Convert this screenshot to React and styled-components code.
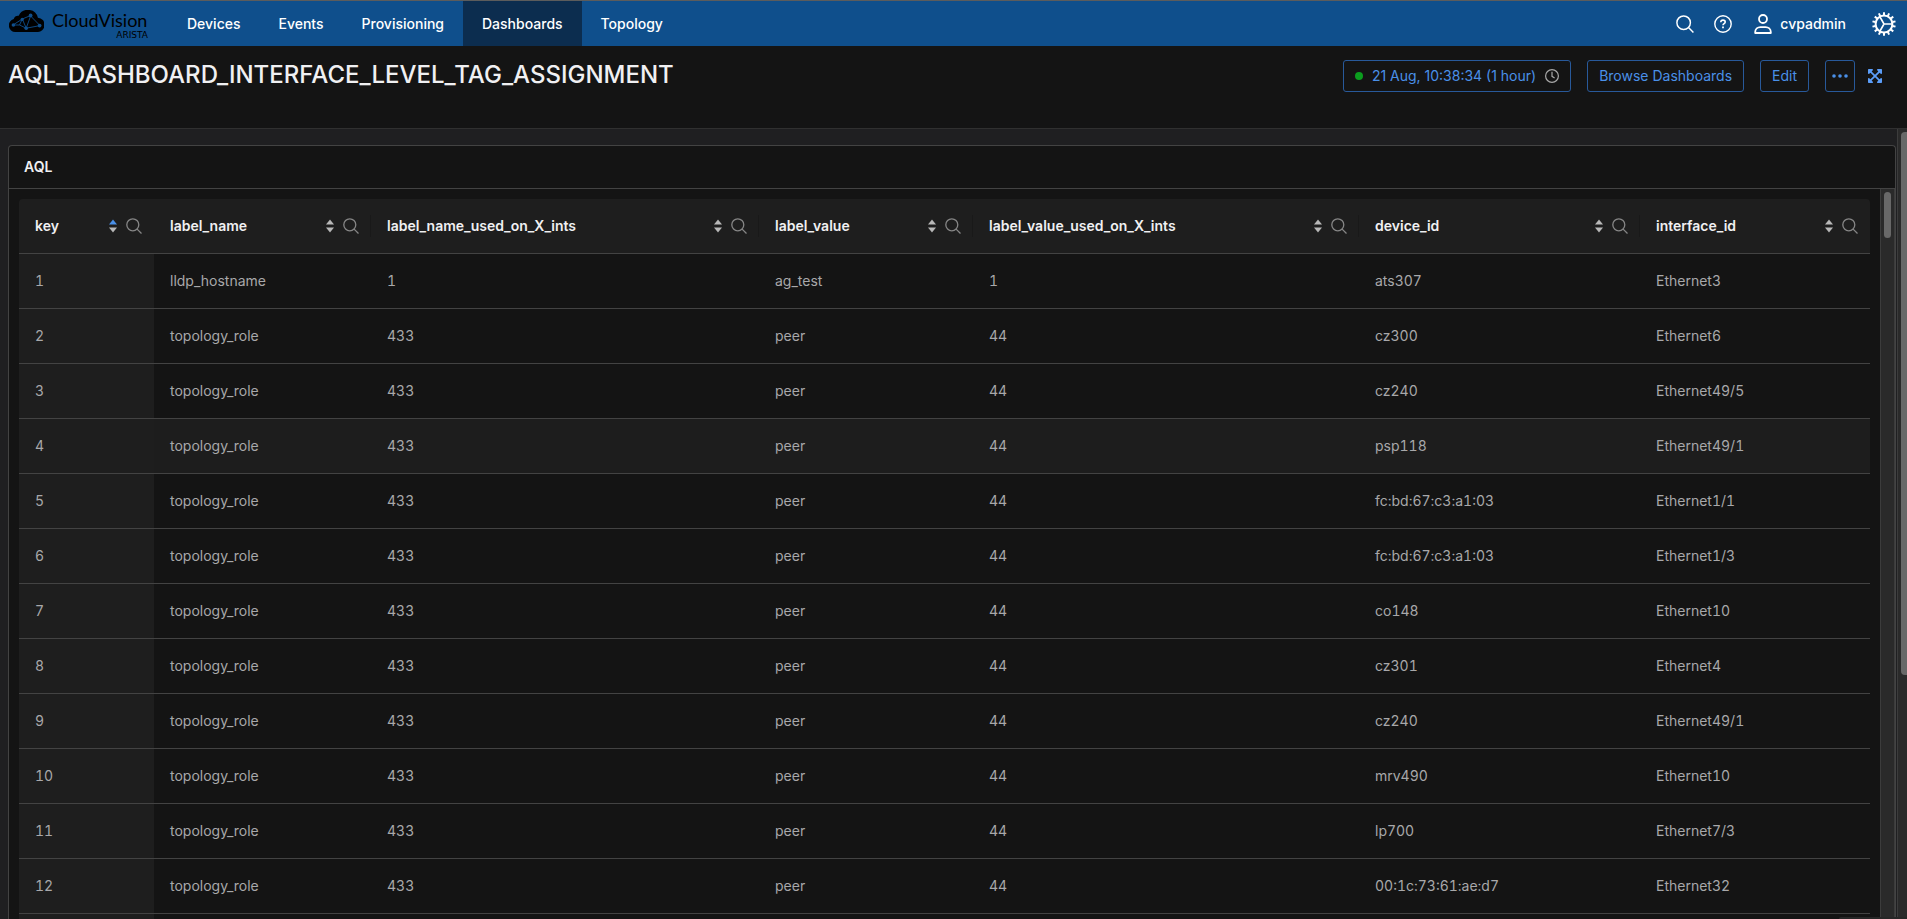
import React from "react";
import styled, { createGlobalStyle } from "styled-components";
import { FaExpandArrowsAlt } from "react-icons/fa";

const color = {
  bar: "#0f4f8c",
  barActive: "#0c2d4f",
  surface: "#141414",
  page: "#1f1f21",
  raised: "#1e1e1e",
  line: "#434343",
  text: "#a8a8aa",
  strong: "#f0f0f2",
  link: "#4a90e8",
  linkBorder: "#28599a",
  track: "#2a2a2a",
  thumb: "#686868",
};

const GlobalStyle = createGlobalStyle`
  *, *::before, *::after { box-sizing: border-box; }
  body {
    margin: 0;
    background: ${color.page};
    color: ${color.text};
    font: 400 14px/22px Inter, "Liberation Sans", sans-serif;
  }
  button {
    margin: 0;
    padding: 0;
    border: 0;
    background: none;
    color: inherit;
    font: inherit;
    cursor: pointer;
  }
  svg { display: block; flex: none; }
`;

const Page = styled.div`
  display: flex;
  flex-direction: column;
  height: 100vh;
  overflow: hidden;
`;

const TopBar = styled.header`
  display: flex;
  flex: none;
  height: 46px;
  border-top: 1px solid #5c5c5c;
  background: ${color.bar};
  color: #fff;
`;

const Brand = styled.a`
  display: flex;
  gap: 8px;
  width: 168px;
  padding: 9px 0 0 9px;
  color: #000;
  text-decoration: none;
`;

const BrandText = styled.span`
  display: flex;
  flex-direction: column;
  width: 96px;
`;

const BrandName = styled.span`
  font: 400 18px/20px Lato, sans-serif;
`;

const BrandOwner = styled.span`
  align-self: flex-end;
  font: 400 9px/10px "DejaVu Sans", sans-serif;
`;

const Nav = styled.nav`
  display: flex;
  flex: 1;
`;

const NavLink = styled.a`
  display: flex;
  align-items: center;
  padding: 0 19px;
  background: ${(p) => (p.$active ? color.barActive : "transparent")};
  color: #fff;
  font-weight: 500;
  text-decoration: none;
`;

const Tools = styled.div`
  display: flex;
  align-items: center;
  gap: 20px;
  padding-right: 11px;
`;

const ToolButton = styled.button`
  display: flex;
  align-items: center;
  gap: 8px;
  font-weight: 500;
`;

const UserButton = styled(ToolButton)`
  margin: 0 6px 0 2px;
`;

const TitleBar = styled.section`
  display: flex;
  flex: none;
  align-items: flex-start;
  justify-content: space-between;
  height: 83px;
  padding: 14px 24px 0 8px;
  border-bottom: 1px solid #303030;
  background: ${color.surface};
`;

const Title = styled.h1`
  margin: 0;
  color: ${color.strong};
  font-size: 24px;
  font-weight: 500;
  line-height: 30px;
`;

const Actions = styled.div`
  display: flex;
  align-items: center;
  gap: 16px;
`;

const OutlineButton = styled.button`
  display: flex;
  align-items: center;
  gap: 9px;
  height: 32px;
  padding: 0 ${(p) => (p.$compact ? 6 : 11)}px;
  border: 1px solid ${color.linkBorder};
  border-radius: 3px;
  color: ${color.link};
`;

const LiveDot = styled.span`
  width: 8px;
  height: 8px;
  border-radius: 50%;
  background: #0b9d1e;
`;

const ExpandButton = styled.button`
  margin-left: -4px;
  color: #5b9df8;
`;

const Workspace = styled.main`
  display: flex;
  flex: 1;
  min-height: 0;
`;

const Board = styled.div`
  display: flex;
  flex: 1;
  min-width: 0;
  padding: 16px 1px 0 8px;
`;

const Panel = styled.section`
  display: flex;
  flex: 1;
  flex-direction: column;
  min-width: 0;
  border: 1px solid ${color.line};
  border-bottom: 0;
  border-radius: 4px 4px 0 0;
  background: ${color.surface};
`;

const PanelTitle = styled.h2`
  flex: none;
  margin: 0;
  padding: 10px 15px;
  border-bottom: 1px solid ${color.line};
  color: ${color.strong};
  font-size: 14px;
  font-weight: 600;
`;

const PanelBody = styled.div`
  display: flex;
  flex: 1;
  min-height: 0;
`;

const TableArea = styled.div`
  flex: 1;
  min-width: 0;
  padding: 10px 10px 0;
  overflow: hidden;
`;

const Table = styled.table`
  width: 100%;
  border-spacing: 0;
  table-layout: fixed;
  font-variant-numeric: tabular-nums;
`;

const Col = styled.col`
  width: ${(p) => p.$size}px;
`;

const HeadCell = styled.th`
  height: 55px;
  padding: 0;
  border-bottom: 1px solid ${color.line};
  background: ${color.raised};
  color: ${color.strong};
  font-weight: 600;
  text-align: left;

  &:first-child { border-top-left-radius: 4px; }
  &:last-child { border-top-right-radius: 4px; }
`;

const HeadContent = styled.div`
  display: flex;
  align-items: center;
  gap: 9px;
  height: 22px;
  padding: 0 12px 0 16px;
  box-shadow: ${(p) => (p.$divided ? "inset -1px 0 #191919" : "none")};
`;

const HeadLabel = styled.span`
  flex: 1;
`;

const Row = styled.tr`
  background: ${(p) => (p.$hovered ? "#1d1d1d" : "transparent")};
`;

const Cell = styled.td`
  height: 55px;
  padding: 0 16px;
  border-bottom: 1px solid ${color.line};

  &:first-child { background: ${color.raised}; }
`;

const Track = styled.div`
  flex: none;
  width: ${(p) => (p.$outer ? 10 : 15)}px;
  padding: ${(p) => (p.$outer ? "3px 0 0 3px" : "3px 3px 0 3px")};
  border-left: 1px solid #3c3c3c;
  border-right: ${(p) => (p.$outer ? "0" : "1px solid #3c3c3c")};
  background: ${color.track};
`;

const Thumb = styled.div`
  height: ${(p) => p.$length};
  border-radius: ${(p) => (p.$outer ? "4px 0 0 4px" : "4px")};
  background: ${color.thumb};
`;

const CornerBubble = styled.div`
  position: fixed;
  right: 0;
  bottom: 0;
  width: 68px;
  height: 2px;
  border-top-left-radius: 2px;
  background: #272727;
`;

function CloudLogo() {
  return (
    <svg width="35" height="22" viewBox="0 0 35 22" aria-hidden="true">
      <path
        d="M6.5 22A6.6 6.6 0 0 1 4.8 9 4.6 4.6 0 0 1 9.7 5.8 10.2 10.2 0 0 1 28.9 7.7a7.1 7.1 0 0 1-.9 14.3z"
        fill="#000"
      />
      <path
        d="M4 15h6.5l6.7 3.2L31 15.6M4 15l9.3-6 3.9 9.2L21.6 6l9.4 9.6M13.3 9l8.3-3.5M10.5 15l2.8-6"
        fill="none"
        stroke={color.bar}
        strokeWidth="0.9"
      />
      <g fill={color.bar}>
        <circle cx="4.4" cy="15" r="1.8" />
        <circle cx="13.2" cy="9.4" r="1.6" />
        <circle cx="21.6" cy="5.4" r="1.9" />
        <circle cx="17.2" cy="18.2" r="1.8" />
        <circle cx="30.6" cy="15.6" r="1.9" />
      </g>
    </svg>
  );
}

function SearchIcon({ size, stroke }) {
  return (
    <svg width={size} height={size} viewBox="0 0 16 16" fill="none" stroke={stroke} strokeWidth="1.3" aria-hidden="true">
      <circle cx="6.8" cy="6.8" r="6" />
      <path d="M11.1 11.1l4.4 4.4" />
    </svg>
  );
}

function HelpIcon() {
  return (
    <svg width="18" height="18" viewBox="0 0 18 18" fill="none" stroke="#fff" strokeWidth="1.4" aria-hidden="true">
      <circle cx="9" cy="9" r="8.2" />
      <path d="M6.8 7.2c0-1.3 1-2.1 2.2-2.1s2.2.8 2.2 2c0 1.5-2.2 1.6-2.2 3.1" strokeWidth="1.6" />
      <path d="M9 11.6v1.7" strokeWidth="1.8" />
    </svg>
  );
}

function UserIcon() {
  return (
    <svg width="18" height="20" viewBox="0 0 18 20" fill="none" stroke="#fff" strokeWidth="1.8" aria-hidden="true">
      <circle cx="9" cy="5" r="4" />
      <path d="M1.2 19v-.9c0-3 2.4-4.9 5.2-4.9h5.2c2.8 0 5.2 1.9 5.2 4.9v.9z" strokeLinejoin="round" />
    </svg>
  );
}

function GearIcon() {
  const teeth = Array.from({ length: 14 }, (_, i) => (i * 360) / 14);
  return (
    <svg width="24" height="24" viewBox="0 0 24 24" fill="none" stroke="#fff" strokeWidth="2" aria-hidden="true">
      <circle cx="12" cy="12" r="8.4" />
      {teeth.map((angle) => (
        <path key={angle} d="M12 0.2v3" transform={`rotate(${angle} 12 12)`} />
      ))}
      <path d="M12 12h8M12 12L8 5M12 12l-4 7" strokeWidth="1.6" />
    </svg>
  );
}

function ClockIcon() {
  return (
    <svg width="14" height="14" viewBox="0 0 14 14" fill="none" stroke="#a8a8a8" strokeWidth="1.2" aria-hidden="true">
      <circle cx="7" cy="7" r="6.4" />
      <path d="M7 2.8v4.5l2.6 1.6" />
    </svg>
  );
}

function DotsIcon() {
  return (
    <svg width="16" height="4" viewBox="0 0 16 4" fill={color.link} aria-hidden="true">
      <circle cx="2" cy="2" r="1.8" />
      <circle cx="8" cy="2" r="1.8" />
      <circle cx="14" cy="2" r="1.8" />
    </svg>
  );
}

function SortIcon({ ascending }) {
  return (
    <svg width="8" height="14" viewBox="0 0 8 14" aria-hidden="true">
      <path d="M0 5.400L4 0.600l4 4.800z" fill={ascending ? color.link : "#b8b8b8"} />
      <path d="M0 8.600L4 13.400l4-4.800z" fill="#b8b8b8" />
    </svg>
  );
}

const navItems = ["Devices", "Events", "Provisioning", "Dashboards", "Topology"];

const columns = [
  { name: "key", size: 135 },
  { name: "label_name", size: 217 },
  { name: "label_name_used_on_X_ints", size: 388 },
  { name: "label_value", size: 214 },
  { name: "label_value_used_on_X_ints", size: 386 },
  { name: "device_id", size: 281 },
  { name: "interface_id", size: 230 },
];

const peer = (device, port) => ["topology_role", "433", "peer", "44", device, port];

const rows = [
  ["lldp_hostname", "1", "ag_test", "1", "ats307", "Ethernet3"],
  peer("cz300", "Ethernet6"),
  peer("cz240", "Ethernet49/5"),
  peer("psp118", "Ethernet49/1"),
  peer("fc:bd:67:c3:a1:03", "Ethernet1/1"),
  peer("fc:bd:67:c3:a1:03", "Ethernet1/3"),
  peer("co148", "Ethernet10"),
  peer("cz301", "Ethernet4"),
  peer("cz240", "Ethernet49/1"),
  peer("mrv490", "Ethernet10"),
  peer("lp700", "Ethernet7/3"),
  peer("00:1c:73:61:ae:d7", "Ethernet32"),
];

export default function App() {
  return (
    <Page>
      <GlobalStyle />
      <TopBar>
        <Brand href="#">
          <CloudLogo />
          <BrandText>
            <BrandName>CloudVision</BrandName>
            <BrandOwner>ARISTA</BrandOwner>
          </BrandText>
        </Brand>
        <Nav>
          {navItems.map((item) => (
            <NavLink key={item} href="#" $active={item === "Dashboards"}>
              {item}
            </NavLink>
          ))}
        </Nav>
        <Tools>
          <ToolButton aria-label="Search"><SearchIcon size={18} stroke="#fff" /></ToolButton>
          <ToolButton aria-label="Help"><HelpIcon /></ToolButton>
          <UserButton>
            <UserIcon />
            cvpadmin
          </UserButton>
          <ToolButton aria-label="Settings"><GearIcon /></ToolButton>
        </Tools>
      </TopBar>

      <TitleBar>
        <Title>AQL_DASHBOARD_INTERFACE_LEVEL_TAG_ASSIGNMENT</Title>
        <Actions>
          <OutlineButton>
            <LiveDot />
            21 Aug, 10:38:34 (1 hour)
            <ClockIcon />
          </OutlineButton>
          <OutlineButton>Browse Dashboards</OutlineButton>
          <OutlineButton>Edit</OutlineButton>
          <OutlineButton $compact aria-label="More actions"><DotsIcon /></OutlineButton>
          <ExpandButton aria-label="Full screen"><FaExpandArrowsAlt size={16} /></ExpandButton>
        </Actions>
      </TitleBar>

      <Workspace>
        <Board>
          <Panel>
            <PanelTitle>AQL</PanelTitle>
            <PanelBody>
              <TableArea>
                <Table>
                  <colgroup>
                    {columns.map((c) => <Col key={c.name} $size={c.size} />)}
                  </colgroup>
                  <thead>
                    <tr>
                      {columns.map((c, i) => (
                        <HeadCell key={c.name} scope="col">
                          <HeadContent $divided={i > 0 && i < columns.length - 1}>
                            <HeadLabel>{c.name}</HeadLabel>
                            <button aria-label={`Sort by ${c.name}`}><SortIcon ascending={i === 0} /></button>
                            <button aria-label={`Search ${c.name}`}><SearchIcon size={16} stroke="#868686" /></button>
                          </HeadContent>
                        </HeadCell>
                      ))}
                    </tr>
                  </thead>
                  <tbody>
                    {rows.map((row, r) => (
                      <Row key={r} $hovered={r === 3}>
                        <Cell>{r + 1}</Cell>
                        {row.map((value, c) => <Cell key={c}>{value}</Cell>)}
                      </Row>
                    ))}
                    <Row>
                      {columns.map((c) => <Cell key={c.name} />)}
                    </Row>
                  </tbody>
                </Table>
              </TableArea>
              <Track>
                <Thumb $length="46px" />
              </Track>
            </PanelBody>
          </Panel>
        </Board>
        <Track $outer>
          <Thumb $outer $length="69%" />
        </Track>
      </Workspace>
      <CornerBubble />
    </Page>
  );
}
